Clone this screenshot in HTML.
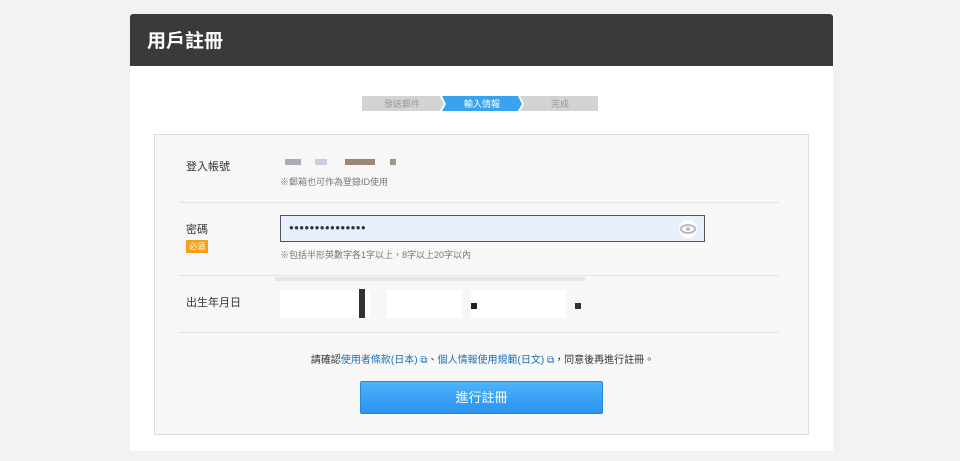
<!DOCTYPE html>
<html><head><meta charset="utf-8"><style>
*{margin:0;padding:0;box-sizing:border-box}
body{width:960px;height:461px;background:#f2f2f2;font-family:"Liberation Sans","Noto Sans CJK TC",sans-serif;position:relative;overflow:hidden;color:#333}
.card{position:absolute;left:130px;top:14px;width:703px;height:437px;background:#fff}
.hd{height:52px;background:#3a3a3a;border-radius:3px 3px 0 0;color:#fff;font-weight:bold;font-size:19px;padding:12px 0 0 17px}
.ab{position:absolute}
.box{position:absolute;left:24px;top:120px;width:655px;height:301px;background:#f7f7f7;border:1px solid #ddd}
.line{position:absolute;left:24px;width:600px;height:1px;background:#e3e3e3}
.lbl{position:absolute;left:31px;font-size:11px;color:#333}
.note{position:absolute;left:125px;font-size:9px;color:#777}
.px{position:absolute;width:6px;height:6px}
</style></head><body>
<div class="card">
<div class="hd">用戶註冊</div>
<svg class="ab" style="left:232px;top:82px" width="236" height="16">
<polygon points="0,0 78,0 82,8 78,15 0,15" fill="#d3d3d3"/>
<polygon points="80,0 156,0 160,8 156,15 80,15 84,8" fill="#3aa3ee"/>
<polygon points="158,0 236,0 236,15 158,15 162,8" fill="#d3d3d3"/>
<text x="40" y="11" font-size="9" fill="#999" text-anchor="middle" font-family="Noto Sans CJK TC">發送郵件</text>
<text x="120" y="11" font-size="9" fill="#fff" text-anchor="middle" font-family="Noto Sans CJK TC">輸入情報</text>
<text x="198" y="11" font-size="9" fill="#999" text-anchor="middle" font-family="Noto Sans CJK TC">完成</text>
</svg>
<div class="box">
<div class="lbl" style="top:23px">登入帳號</div>
<div class="px" style="left:130px;top:24px;background:#aab;width:16px"></div>
<div class="px" style="left:160px;top:24px;background:#ccd;width:12px"></div>
<div class="px" style="left:190px;top:24px;background:#987;width:30px"></div>
<div class="px" style="left:235px;top:24px;background:#998"></div>
<div class="note" style="top:40px">※郵箱也可作為登錄ID使用</div>
<div class="line" style="top:67px"></div>
<div class="lbl" style="top:86px">密碼</div>
<div class="ab" style="left:31px;top:105px;background:#f3a01c;color:#fff;font-size:8px;padding:1px 3px">必須</div>
<div class="ab" style="left:125px;top:80px;width:425px;height:27px;background:#e8f0fd;border:1px solid #555;font-size:8px;padding:7px 8px;letter-spacing:0.3px">●●●●●●●●●●●●●●●</div>
<svg class="ab" style="left:524px;top:85px" width="18" height="18"><circle cx="9" cy="9" r="9" fill="#fff"/><ellipse cx="9" cy="9" rx="7" ry="4" fill="none" stroke="#bbb" stroke-width="2"/><circle cx="9" cy="9" r="2" fill="#bbb"/></svg>
<div class="note" style="top:113px">※包括半形英數字各1字以上，8字以上20字以內</div>
<div class="line" style="top:140px"></div>
<div class="ab" style="left:120px;top:142px;width:310px;height:4px;background:#e6e6e6"></div>
<div class="ab" style="left:125px;top:155px;width:90px;height:28px;background:#fff"></div>
<div class="ab" style="left:204px;top:154px;width:6px;height:29px;background:#333"></div>
<div class="ab" style="left:232px;top:155px;width:75px;height:28px;background:#fff"></div>
<div class="ab" style="left:316px;top:155px;width:95px;height:28px;background:#fff"></div>
<div class="px" style="left:316px;top:168px;background:#222"></div>
<div class="px" style="left:420px;top:168px;background:#333"></div>
<div class="lbl" style="top:159px">出生年月日</div>
<div class="line" style="top:197px"></div>
<div class="ab" style="left:0;width:655px;top:216px;text-align:center;font-size:10px;color:#333">請確認<span style="color:#1e6fb5">使用者條款(日本) ⧉</span>、<span style="color:#1e6fb5">個人情報使用規範(日文) ⧉</span>，同意後再進行註冊。</div>
<div class="ab" style="left:205px;top:246px;width:243px;height:33px;background:linear-gradient(#4db3fa,#2a93f0);border-radius:2px;border:1px solid #2a86d8;color:#fff;font-size:13px;text-align:center;line-height:31px">進行註冊</div>
</div>
</div>
</body></html>
